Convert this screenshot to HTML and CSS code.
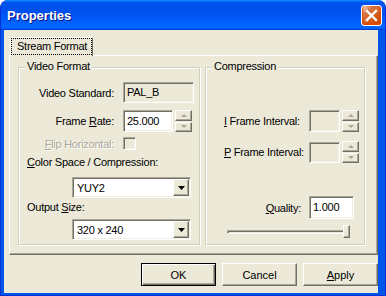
FILE: index.html
```html
<!DOCTYPE html>
<html lang="en">
<head>
  <meta charset="UTF-8">
  <title>Properties</title>
  <link rel="stylesheet" href="styles.css">
</head>
<body>
  <div class="window">
    <div class="titlebar">
      <span class="title">Properties</span>
      <button class="close" aria-label="Close">
        <svg width="19" height="19" viewBox="0 0 19 19"><path d="M5 5 L14 14 M14 5 L5 14" stroke="#fff" stroke-width="2.4" stroke-linecap="square"/></svg>
      </button>
    </div>

    <div class="client">
      <div class="tabs">
        <div class="tab"><span class="focus">Stream Format</span></div>
      </div>

      <div class="panel">
        <div class="group video">
          <div class="legend">Video Format</div>
          <div class="row row-standard">
            <span class="lbl">Video Standard:</span>
            <div class="field readonly w-standard">PAL_B</div>
          </div>
          <div class="row row-rate">
            <span class="lbl">Frame <u>R</u>ate:</span>
            <div class="field w-rate">25.000</div>
            <div class="spin">
              <span class="spin-btn"><i class="arrow-up"></i></span>
              <span class="spin-btn"><i class="arrow-down"></i></span>
            </div>
          </div>
          <div class="row row-flip">
            <span class="lbl disabled"><u>F</u>lip Horizontal:</span>
            <span class="check"></span>
          </div>
          <div class="caption cap-color"><u>C</u>olor Space / Compression:</div>
          <div class="combo combo-color">
            <span class="combo-text">YUY2</span>
            <span class="drop"><svg width="7" height="4" viewBox="0 0 7 4"><path d="M0 0H7L3.5 4Z" fill="#000"/></svg></span>
          </div>
          <div class="caption cap-size">Output <u>S</u>ize:</div>
          <div class="combo combo-size">
            <span class="combo-text">320 x 240</span>
            <span class="drop"><svg width="7" height="4" viewBox="0 0 7 4"><path d="M0 0H7L3.5 4Z" fill="#000"/></svg></span>
          </div>
        </div>

        <div class="group compression">
          <div class="legend">Compression</div>
          <div class="row row-iframe">
            <span class="cmp-lbl"><u>I</u> Frame Interval:</span>
            <div class="field readonly w-interval"></div>
            <div class="spin">
              <span class="spin-btn"><i class="arrow-up"></i></span>
              <span class="spin-btn"><i class="arrow-down"></i></span>
            </div>
          </div>
          <div class="row row-pframe">
            <span class="cmp-lbl"><u>P</u> Frame Interval:</span>
            <div class="field readonly w-interval h21"></div>
            <div class="spin h21">
              <span class="spin-btn"><i class="arrow-up"></i></span>
              <span class="spin-btn"><i class="arrow-down"></i></span>
            </div>
          </div>
          <div class="row row-quality">
            <span class="q-lbl"><u>Q</u>uality:</span>
            <div class="field w-quality">1.000</div>
          </div>
          <div class="slider">
            <span class="track"></span>
            <span class="thumb"></span>
          </div>
        </div>
      </div>

      <div class="actions">
        <button class="btn default">OK</button>
        <button class="btn">Cancel</button>
        <button class="btn"><u>A</u>pply</button>
      </div>
    </div>
  </div>
</body>
</html>
```

FILE: styles.css
```css
* {
  box-sizing: border-box;
}
body {
  margin: 0;
  background: #fff;
  font-family: "Liberation Sans", Arial, sans-serif;
  font-size: 11px;
  letter-spacing: -0.25px;
  color: #000;
}
.window {
  width: 386px;
  height: 296px;
  display: flex;
  flex-direction: column;
  background: #0055ea;
  border: 1px solid #0831d9;
  border-top: none;
  border-radius: 8px 8px 0 0;
  overflow: hidden;
}
.titlebar {
  height: 30px;
  flex: none;
  display: flex;
  align-items: center;
  justify-content: space-between;
  padding: 1px 3px 0 6px;
  background: linear-gradient(180deg, #0997ff, #0053ee 8%, #0050ee 40%, #06f 88%, #06f 93%, #005bff 95%, #003dd7 96%, #003dd7);
}
.title {
  color: #fff;
  font-weight: bold;
  font-size: 13px;
  letter-spacing: 0;
  text-shadow: 1px 1px #0f1089;
}
.close {
  width: 21px;
  height: 21px;
  padding: 0;
  border: 1px solid #fff;
  border-radius: 3px;
  background: radial-gradient(circle at 90% 90%, #cc4600 0, #dc6527 55%, #cd7546 70%, #ffccb2 90%, #fff 100%);
  box-shadow: inset 0 -1px 2px 1px #da4600;
  display: flex;
  align-items: center;
  justify-content: center;
}
.client {
  flex: 1;
  margin: 0 7px 2px 3px;
  padding-top: 7px;
  background: #ece9d8;
  display: flex;
  flex-direction: column;
}

/* tab strip */
.tabs {
  display: flex;
  padding-left: 6px;
}
.tab {
  width: 83px;
  height: 19px;
  margin-bottom: -1px;
  position: relative;
  z-index: 1;
  background: #ece9d8;
  border: 1px solid;
  border-color: #fff #716f64 transparent #fff;
  border-bottom: none;
  border-radius: 2px 2px 0 0;
}
.focus {
  display: block;
  height: 17px;
  border: 1px dotted #000;
  padding-left: 5px;
  line-height: 15px;
}
.panel {
  height: 200px;
  margin-left: 5px;
  display: flex;
  gap: 5px;
  padding: 11px 0 0 8px;
  border: 1px solid;
  border-color: #fff #716f64 #716f64 #fff;
  box-shadow: inset -1px -1px #aca899;
}

/* group boxes */
.group {
  height: 178px;
  border: 1px solid #d0d0bf;
  box-shadow: inset 1px 1px #fff, 1px 1px #fff;
  display: flex;
  flex-direction: column;
  align-items: flex-start;
}
.video {
  width: 182px;
}
.compression {
  width: 160px;
}
.legend {
  margin: -8px 0 0 6px;
  padding: 0 2px;
  line-height: 13px;
  background: #ece9d8;
}
.row {
  display: flex;
  align-items: center;
}
.lbl {
  flex: none;
  width: 104px;
  padding-right: 9px;
  text-align: right;
}
.cmp-lbl {
  flex: none;
  width: 103px;
  padding-left: 18px;
}
.q-lbl {
  flex: none;
  width: 103px;
  padding-right: 8px;
  text-align: right;
}
.disabled {
  color: #aca899;
  text-shadow: 1px 1px #fff;
}
.caption {
  padding-left: 8px;
  line-height: 13px;
}
.row-standard { margin-top: 9px; }
.row-rate { margin-top: 7px; }
.row-flip { margin-top: 5px; }
.cap-color { margin-top: 6px; }
.combo-color { margin-top: 8px; }
.cap-size { margin-top: 3px; }
.combo-size { margin-top: 5px; }
.row-iframe { margin-top: 37px; }
.row-pframe { margin-top: 9px; }
.row-quality { margin-top: 33px; }

/* inputs */
.field {
  height: 22px;
  border: 1px solid;
  border-color: #aca899 #fff #fff #aca899;
  box-shadow: inset 1px 1px #716f64, inset -1px -1px #f1efe2;
  background: #fff;
  padding-left: 3px;
  line-height: 20px;
}
.readonly {
  background: #ece9d8;
}
.w-standard { width: 71px; height: 21px; line-height: 19px; }
.w-rate { width: 50px; }
.w-interval { width: 31px; }
.w-quality { width: 45px; height: 23px; line-height: 21px; }
.h21 { height: 21px; }
.spin {
  width: 17px;
  height: 22px;
  margin-left: 2px;
  display: flex;
  flex-direction: column;
  gap: 1px;
}
.spin-btn,
.drop,
.thumb,
.btn {
  background: #ece9d8;
  border: 1px solid;
  border-color: #fff #716f64 #716f64 #fff;
  box-shadow: inset -1px -1px #aca899;
}
.spin-btn {
  flex: 1;
  display: flex;
  align-items: center;
  justify-content: center;
}
.arrow-up,
.arrow-down {
  width: 0;
  height: 0;
  border-left: 3px solid transparent;
  border-right: 3px solid transparent;
}
.arrow-up {
  border-bottom: 3px solid #aca899;
}
.arrow-down {
  border-top: 3px solid #aca899;
}
.check {
  width: 13px;
  height: 13px;
  border: 1px solid;
  border-color: #aca899 #fff #fff #aca899;
  box-shadow: inset 1px 1px #716f64, inset -1px -1px #f1efe2;
  background: #ece9d8;
}
.combo {
  width: 119px;
  height: 21px;
  margin-left: 53px;
  padding: 1px;
  display: flex;
  align-items: center;
  border: 1px solid;
  border-color: #aca899 #fff #fff #aca899;
  box-shadow: inset 1px 1px #716f64, inset -1px -1px #f1efe2;
  background: #fff;
}
.combo-text {
  padding-left: 3px;
}
.drop {
  margin-left: auto;
  width: 16px;
  height: 17px;
  display: flex;
  align-items: center;
  justify-content: center;
}

/* slider */
.slider {
  position: relative;
  width: 123px;
  height: 13px;
  margin: 6px 0 0 21px;
}
.track {
  position: absolute;
  left: 0;
  right: 1px;
  top: 5px;
  height: 4px;
  border: 1px solid;
  border-color: #aca899 #fff #fff #aca899;
  box-shadow: inset 1px 1px #716f64;
}
.thumb {
  position: absolute;
  right: 0;
  top: 0;
  width: 7px;
  height: 13px;
}

/* dialog buttons */
.actions {
  display: flex;
  justify-content: flex-end;
  gap: 6px;
  margin-top: 8px;
}
.btn {
  width: 75px;
  height: 23px;
  padding: 0;
  font: inherit;
  color: #000;
}
.btn.default {
  border: 1px solid #000;
  box-shadow: inset 1px 1px #fff, inset -1px -1px #716f64, inset -2px -2px #aca899;
}
```
